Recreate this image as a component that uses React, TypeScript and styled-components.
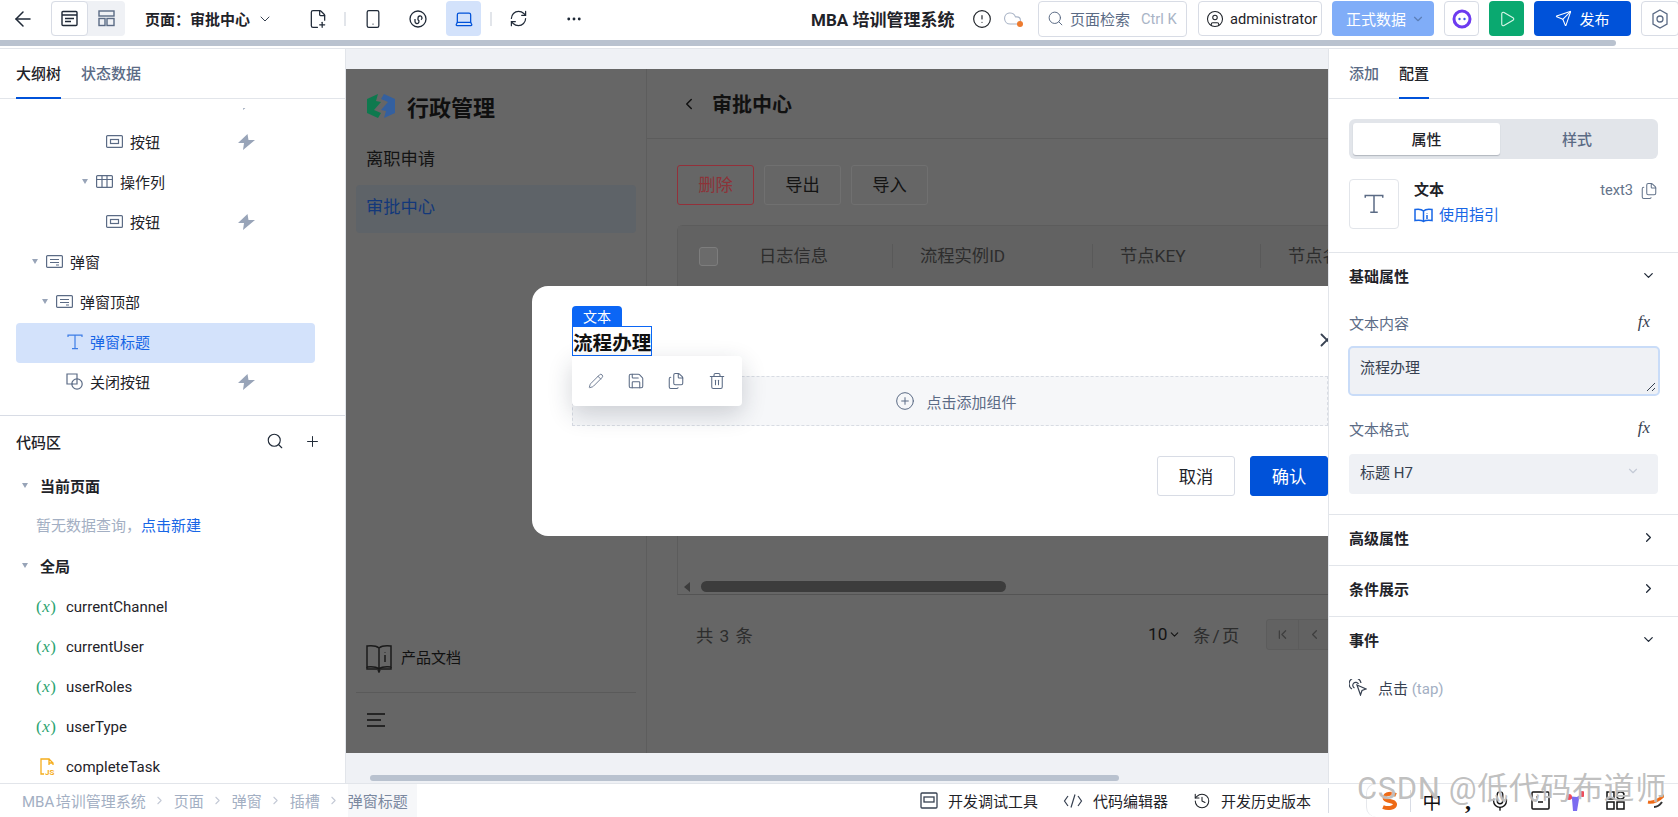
import React from "react";
import styled, { createGlobalStyle } from "styled-components";
import {
  ArrowLeft, ChevronDown, ChevronRight, ChevronLeft, ChevronFirst, Search, Plus, X, Pencil, Save, Files, Trash2,
  CirclePlus, Laptop, Smartphone, FilePlus2, RefreshCw, Ellipsis, Send, Play, CircleUser, History, CircleAlert,
  Cloud, Mic,
} from "lucide-react";

const Global = createGlobalStyle`
  html, body, #root { margin: 0; padding: 0; height: 100%; }
  body {
    overflow: hidden;
    font-family: Roboto, "Noto Sans CJK SC", sans-serif;
    font-size: 15px;
    color: #1f2329;
    background: #fff;
  }
`;

const Page = styled.div`
  position: relative; width: 1678px; height: 817px; display: flex; flex-direction: column; overflow: hidden;
`;

/* ---------- top bar ---------- */
const TopBar = styled.header`
  height: 40px; flex: none; display: flex; align-items: center; padding-bottom: 3px; box-sizing: border-box; overflow: hidden;
`;
const BackBtn = styled.span`
  display: flex; margin-left: 11px; color: #1f2937;
`;
const ViewToggle = styled.div`
  margin-left: 16px; width: 74px; height: 35px; display: grid; grid-template-columns: 37px 37px; background: #eff1f5; border-radius: 4px;
`;
const ViewOption = styled.span<{ $on?: boolean }>`
  display: flex; align-items: center; justify-content: center; border-radius: 4px; box-sizing: border-box;
  background: ${(p) => (p.$on ? "#fff" : "transparent")};
  border: ${(p) => (p.$on ? "1px solid #d8dce5" : "none")};
`;
const PageTitle = styled.strong`
  margin-left: 20px; font-weight: 700; white-space: nowrap; width: 105px; display: block;
`;
const TitleCaret = styled.span`
  display: flex; margin-left: 7px; margin-right: 27px; color: #374151;
`;
const IconBtn = styled.span<{ $on?: boolean; $ml?: number }>`
  width: 35px; height: 35px; display: flex; align-items: center; justify-content: center; border-radius: 4px; flex: none;
  margin-left: ${(p) => p.$ml ?? 0}px;
  color: ${(p) => (p.$on ? "#0052d9" : "#1f2937")};
  background: ${(p) => (p.$on ? "#d3e2fb" : "transparent")};
`;
const BarSep = styled.i`
  width: 2px; height: 14px; background: #e2e5ea; margin: 0 9px; flex: none;
`;
const AppName = styled.strong`
  margin-left: 220px; font-size: 17px; font-weight: 700; width: 160px; white-space: nowrap; flex: none;
`;
const Alert = styled.span`
  display: flex; margin-left: 1px; color: #1f2329;
`;
const CloudWrap = styled.span`
  position: relative; display: flex; margin-left: 11px; margin-right: 16px; color: #a9b4c6;
`;
const CloudDot = styled.i`
  position: absolute; right: -1px; bottom: 1px; width: 6px; height: 6px; border-radius: 50%; background: #ed7b2f;
`;
const SearchBox = styled.div`
  width: 149px; height: 36px; box-sizing: border-box; border: 1px solid #d8dce5; border-radius: 4px; display: flex; align-items: center; padding-left: 8px; flex: none; color: #5b6b85;
`;
const SearchText = styled.span`
  margin-left: 6px; width: 71px; white-space: nowrap;
`;
const Kbd = styled.span`
  color: #a9b4c6; white-space: nowrap; font-size: 14.67px;
`;
const UserBox = styled.div`
  margin-left: 11px; width: 124px; height: 35px; box-sizing: border-box; border: 1px solid #d8dce5; border-radius: 4px; display: flex; align-items: center; gap: 6px; padding-left: 7px; flex: none; white-space: nowrap; font-size: 14.67px;
`;
const DataBtn = styled.div`
  margin-left: 10px; width: 102px; height: 35px; background: #80adf8; color: #fff; border-radius: 4px; display: flex; align-items: center; padding-left: 14px; box-sizing: border-box; gap: 5px; flex: none; white-space: nowrap;
`;
const SquareBtn = styled.div<{ $bg?: string; $w?: number }>`
  margin-left: 10px; width: ${(p) => p.$w ?? 35}px; height: 35px; box-sizing: border-box; border-radius: 4px; flex: none;
  display: flex; align-items: center; justify-content: center;
  background: ${(p) => p.$bg ?? "#fff"};
  border: ${(p) => (p.$bg ? "none" : "1px solid #d8dce5")};
`;
const PublishBtn = styled.div`
  margin-left: 10px; width: 97px; height: 35px; background: #0052d9; color: #fff; border-radius: 4px; display: flex; align-items: center; justify-content: center; gap: 7px; flex: none;
`;
const TopScroll = styled.div`
  height: 9px; flex: none; border-bottom: 1px solid #e2e5ea; box-sizing: border-box;
`;
const TopThumb = styled.div`
  width: 1616px; height: 6px; background: #b9c2cf; border-radius: 0 3px 3px 0;
`;

/* ---------- shell ---------- */
const Main = styled.main`
  flex: 1; min-height: 0; display: flex;
`;
const Left = styled.aside`
  width: 346px; flex: none; box-sizing: border-box; border-right: 1px solid #e2e5ea; display: flex; flex-direction: column;
`;
const Tabs = styled.div<{ $pl: number }>`
  height: 50px; flex: none; box-sizing: border-box; border-bottom: 1px solid #e2e5ea; display: flex; gap: 20px; padding-left: ${(p) => p.$pl}px;
`;
const Tab = styled.span<{ $on?: boolean }>`
  height: 50px; box-sizing: border-box; display: flex; align-items: center; font-weight: 500; white-space: nowrap; padding-bottom: 2px;
  color: ${(p) => (p.$on ? "#1f2329" : "#5b6b85")};
  border-bottom: 2px solid ${(p) => (p.$on ? "#0052d9" : "transparent")};
`;

/* tree */
const Tree = styled.div`
  height: 317px; flex: none; box-sizing: border-box; padding-top: 9px; border-bottom: 1px solid #d8dce5;
`;
const TreeViewport = styled.div`
  height: 100%; overflow: hidden;
`;
const TreeList = styled.div`
  margin-top: -25px;
`;
const TreeRow = styled.div<{ $depth: number; $on?: boolean }>`
  height: 40px; width: 299px; margin-left: 16px; box-sizing: border-box; display: flex; align-items: center; border-radius: 4px;
  padding: 0 60px 3px ${(p) => 16 + p.$depth * 10}px;
  background: ${(p) => (p.$on ? "#d3e2fb" : "transparent")};
  color: ${(p) => (p.$on ? "#1766e6" : "#1f2329")};
`;
const Caret = styled.i<{ $show?: boolean }>`
  width: 0; height: 0; flex: none; margin-right: 8px;
  border-left: 3.5px solid transparent; border-right: 3.5px solid transparent;
  border-top: 5px solid ${(p) => (p.$show ? "#98a4b8" : "transparent")};
`;
const TreeIcon = styled.span`
  display: flex; width: 17px; justify-content: center; margin-right: 7px; flex: none;
`;
const Bolt = styled.span`
  display: flex; margin-left: auto;
`;
const CodeArea = styled.div`
  flex: 1; min-height: 0; overflow: hidden;
`;
const CodeHead = styled.div`
  height: 50px; display: flex; align-items: center; padding: 0 24px 0 16px; font-weight: 500;
`;
const CodeTitle = styled.span`
  flex: 1;
`;
const CodeTools = styled.span`
  display: flex; gap: 20px; color: #1f2937; align-items: center;
`;
const GroupRow = styled.div`
  height: 40px; display: flex; align-items: center; padding: 0 0 2px 22px; box-sizing: border-box; font-weight: 700;
`;
const GroupCaret = styled(Caret)`
  margin-right: 12px;
`;
const EmptyRow = styled.div`
  height: 40px; display: flex; align-items: center; padding: 0 0 3px 36px; box-sizing: border-box; color: #a3afc3;
`;
const NewLink = styled.span`
  color: #1766e6;
`;
const VarRow = styled.div`
  height: 40px; display: flex; align-items: center; padding: 2px 0 0 36px; box-sizing: border-box;
`;
const VarMark = styled.span`
  width: 30px; flex: none; color: #2ba471; font-family: "Liberation Serif", serif; font-size: 17px; white-space: nowrap; letter-spacing: 0.5px;
  & > em { font-style: italic; }
`;
const JsMark = styled.span`
  width: 30px; flex: none; display: flex; padding-left: 4px; box-sizing: border-box;
`;

/* canvas */
const Canvas = styled.section`
  flex: 1; min-width: 0; background: #eff1f5; padding-top: 20px; box-sizing: border-box;
`;
const Stage = styled.div`
  position: relative; height: 684px; background: #666; overflow: hidden; display: flex;
`;
const CanvasThumb = styled.div`
  margin: 22px 0 0 24px; width: 749px; height: 6px; background: #b9c2cf; border-radius: 3px;
`;
const Nav = styled.nav`
  width: 301px; flex: none; box-sizing: border-box; border-right: 1px solid #5d5d5d; display: flex; flex-direction: column;
`;
const Brand = styled.div`
  height: 64px; flex: none; display: flex; align-items: center; padding: 10px 0 0 21px; box-sizing: border-box; gap: 12px; font-size: 22px; font-weight: 700; color: #0f0f0f;
`;
const NavItem = styled.div<{ $on?: boolean }>`
  width: 280px; height: 48px; margin: 0 0 4px 10px; padding: 0 0 ${(p) => (p.$on ? 8 : 0)}px 10px; box-sizing: border-box; border-radius: 4px; display: flex; align-items: center; font-size: 17.3px;
  color: ${(p) => (p.$on ? "#13387a" : "#141414")};
  background: ${(p) => (p.$on ? "#5e6368" : "transparent")};
`;
const NavFoot = styled.div`
  margin: auto 10px 0;
`;
const DocRow = styled.div`
  height: 61px; display: flex; align-items: center; gap: 9px; padding: 0 0 8px 10px; box-sizing: border-box; border-bottom: 1px solid #5a5a5a; color: #111;
`;
const DocLabel = styled.span`
  margin-bottom: 4px;
`;
const MenuRow = styled.div`
  height: 60px; display: flex; align-items: center; padding: 0 0 6px 11px; box-sizing: border-box; color: #111;
`;
const Content = styled.div`
  flex: none; width: 900px;
`;
const ContentHead = styled.div`
  height: 70px; box-sizing: border-box; border-bottom: 1px solid #5c5c5c; display: flex; align-items: center; padding-left: 33px; gap: 14px; font-size: 20px; font-weight: 700; color: #111;
`;
const ActionRow = styled.div`
  display: flex; gap: 10px; padding: 26px 0 0 30px;
`;
const GhostBtn = styled.div<{ $danger?: boolean }>`
  width: 77px; height: 40px; box-sizing: border-box; border-radius: 3px; display: flex; align-items: center; justify-content: center; font-size: 17.3px; padding-bottom: 3px;
  color: ${(p) => (p.$danger ? "#8c3338" : "#141414")};
  border: 1px solid ${(p) => (p.$danger ? "#93303a" : "#707070")};
`;
const TableBox = styled.div`
  position: relative; margin: 20px 0 0 30px; width: 880px; height: 370px; box-sizing: border-box; border: 1px solid #5c5c5c; border-bottom-color: #545454; border-radius: 6px 0 0 0;
`;
const TableHead = styled.div`
  height: 60px; background: #626262; display: grid; grid-template-columns: 54px 161px 200px 168px 200px; font-size: 17.3px; color: #2d2d2d;
`;
const HeadCell = styled.div`
  position: relative; display: flex; align-items: center; padding: 0 0 4px 27px; white-space: nowrap;
  &::after { content: ""; position: absolute; right: 0; top: 18px; height: 24px; width: 1px; background: #595959; }
`;
const CheckCell = styled.div`
  display: flex; align-items: center; padding-left: 21px;
`;
const CheckBox = styled.i`
  width: 19px; height: 19px; box-sizing: border-box; border: 1px solid #7d7d7d; border-radius: 3px; background: #6b6b6b;
`;
const HScroll = styled.div`
  position: absolute; left: 6px; bottom: 2px; display: flex; align-items: center; gap: 11px;
`;
const HArrow = styled.i`
  width: 0; height: 0; border-top: 5px solid transparent; border-bottom: 5px solid transparent; border-right: 6px solid #3c3c3c;
`;
const HThumb = styled.i`
  width: 305px; height: 11px; border-radius: 6px; background: #3c3c3c;
`;
const Pager = styled.div`
  height: 82px; display: flex; align-items: center; padding: 0 0 4px 49px; box-sizing: border-box; font-size: 17.3px; color: #2d2d2d; white-space: nowrap;
`;
const PagerTotal = styled.span`
  width: 452px; word-spacing: 2px; flex: none;
`;
const PageSize = styled.span`
  display: flex; align-items: center; gap: 1px; color: #141414; width: 45px; flex: none;
`;
const PerPage = styled.span`
  width: 73px; flex: none; word-spacing: -2px;
`;
const PagerBtns = styled.span`
  display: flex; width: 80px; height: 31px; box-sizing: border-box; border: 1px solid #5c5c5c; border-radius: 3px; background: #626262; color: #3f3f3f;
`;
const PagerBtn = styled.span`
  width: 31px; display: flex; align-items: center; justify-content: center; border-right: 1px solid #5c5c5c;
`;

/* modal */
const Modal = styled.div`
  position: absolute; left: 186px; top: 217px; width: 836px; height: 250px; box-sizing: border-box; background: #fff; border-radius: 16px; padding: 20px 40px 0; color: #1f2329;
`;
const CloseX = styled.span`
  position: absolute; right: 30px; top: 43px; display: flex; color: #374151;
`;
const KindTag = styled.div`
  width: 50px; height: 20px; background: #0b66f5; color: #fff; border-radius: 4px 4px 0 0; display: flex; align-items: center; justify-content: center; font-size: 14px;
`;
const Selected = styled.div`
  width: 80px; height: 30px; box-sizing: border-box; border: 1px solid #0b66f5; display: flex; align-items: center; font-size: 19.6px; font-weight: 700; white-space: nowrap; color: #111;
`;
const FloatTools = styled.div`
  position: absolute; left: 40px; top: 70px; z-index: 2; width: 170px; height: 50px; background: #fff; border-radius: 4px; box-shadow: 0 8px 24px rgba(30, 40, 60, 0.2); display: flex; align-items: center; justify-content: space-around; padding: 0 5px; box-sizing: border-box; color: #5b6b85;
`;
const DropZone = styled.div`
  margin-top: 20px; height: 50px; box-sizing: border-box; background: #f6f7f9; border: 1px dashed #d8dce3; display: flex; align-items: center; justify-content: center; gap: 11px; color: #5b6b85; padding: 0 0 0 12px;
`;
const ModalFoot = styled.div`
  margin-top: 30px; display: flex; justify-content: flex-end; gap: 15px;
`;
const ModalBtn = styled.div<{ $primary?: boolean }>`
  width: 78px; height: 40px; box-sizing: border-box; border-radius: 3px; display: flex; align-items: center; justify-content: center; font-size: 17.3px; padding-bottom: 2px;
  color: ${(p) => (p.$primary ? "#fff" : "#1f2329")};
  background: ${(p) => (p.$primary ? "#0052d9" : "#fff")};
  border: 1px solid ${(p) => (p.$primary ? "#0052d9" : "#d8dce5")};
`;

/* right panel */
const Right = styled.aside`
  width: 350px; flex: none; box-sizing: border-box; border-left: 1px solid #e2e5ea; display: flex; flex-direction: column;
`;
const Seg = styled.div`
  flex: none; margin: 20px 20px 0; height: 40px; padding: 4px; box-sizing: border-box; background: #e2e5ea; border-radius: 6px; display: grid; grid-template-columns: 147px 1fr;
`;
const SegItem = styled.span<{ $on?: boolean }>`
  display: flex; align-items: center; justify-content: center; border-radius: 3px; font-weight: 500; padding-bottom: 2px;
  color: ${(p) => (p.$on ? "#1f2329" : "#5b6b85")};
  background: ${(p) => (p.$on ? "#fff" : "transparent")};
  box-shadow: ${(p) => (p.$on ? "0 1px 1px rgba(30,40,60,.25)" : "none")};
`;
const Info = styled.div`
  flex: none; display: flex; gap: 15px; padding: 20px 20px 23px; border-bottom: 1px solid #e2e5ea;
`;
const InfoIcon = styled.div`
  width: 50px; height: 50px; box-sizing: border-box; border: 1px solid #e2e5ea; border-radius: 4px; display: flex; align-items: center; justify-content: center; flex: none;
`;
const InfoBody = styled.div`
  flex: 1; height: 50px; display: flex; flex-direction: column; gap: 4px; padding-top: 1px; box-sizing: border-box; line-height: 21px;
`;
const InfoLine = styled.div`
  display: flex; align-items: center; justify-content: space-between;
`;
const InfoName = styled.strong`
  font-weight: 700;
`;
const InfoId = styled.span`
  display: flex; align-items: center; gap: 7px; color: #64748b; font-size: 14.67px;
`;
const GuideLink = styled.span`
  display: flex; align-items: center; gap: 6px; color: #1766e6;
`;
const Section = styled.div<{ $pb?: number; $end?: boolean }>`
  flex: none; padding: 0 20px ${(p) => p.$pb ?? 0}px;
  border-bottom: ${(p) => (p.$end ? "none" : "1px solid #e2e5ea")};
`;
const SectionHead = styled.div<{ $h?: number }>`
  height: ${(p) => p.$h ?? 48}px; display: flex; align-items: center; justify-content: space-between; font-weight: 700; color: #1f2329; box-sizing: border-box;
  padding-bottom: ${(p) => (p.$h ? 6 : 4)}px;
`;
const HeadCaret = styled.span`
  display: flex; margin-right: 2px; color: #1f2937;
`;
const FieldLabel = styled.div<{ $mt: number; $mb: number }>`
  height: 24px; margin: ${(p) => p.$mt}px 0 ${(p) => p.$mb}px; display: flex; align-items: center; justify-content: space-between; color: #5b6b85; box-sizing: border-box; padding-bottom: 6px;
`;
const Fx = styled.span`
  font-family: "Liberation Serif", serif; font-style: italic; font-size: 17px; color: #374151; margin-right: 8px;
`;
const TextArea = styled.div`
  position: relative; margin: 0 -2px 0 -1px; height: 50px; box-sizing: border-box; background: #eff1f5; border: 2px solid #c9dcf8; border-radius: 5px; padding: 8px 10px; color: #374151;
`;
const Grip = styled.svg`
  position: absolute; right: 2px; bottom: 2px;
`;
const SelectBox = styled.div`
  height: 40px; background: #eff1f5; border-radius: 4px; display: flex; align-items: center; justify-content: space-between; padding: 0 18px 6px 11px; box-sizing: border-box; color: #374151;
`;
const EventRow = styled.div`
  display: flex; align-items: center; gap: 11px; margin-top: 12px; color: #374151;
`;
const Tap = styled.span`
  color: #a3afc3;
`;

/* footer */
const Footer = styled.footer`
  height: 34px; flex: none; box-sizing: border-box; border-top: 1px solid #e2e5ea; display: flex; align-items: stretch;
`;
const Crumbs = styled.div`
  display: flex; align-items: center; gap: 7.5px; padding-left: 22px; color: #a3afc3; white-space: nowrap;
`;
const CrumbLast = styled.span`
  align-self: stretch; display: flex; align-items: center; background: #f6f7f9; color: #7a889f; padding-right: 9px;
`;
const Tools = styled.div`
  margin-left: auto; margin-right: 349px; align-self: center; height: 25px; width: 409px; box-sizing: border-box; display: flex; align-items: center; gap: 25px; border-right: 1px solid #d8dce5; white-space: nowrap;
`;
const Tool = styled.span`
  display: flex; align-items: center; gap: 10px; color: #1f2329;
`;
const Ime = styled.div`
  position: absolute; right: 0; bottom: 0; width: 312px; height: 34px; box-sizing: border-box; background: #fff; border: 1px solid #e6e8ec; border-right: none; border-bottom: none; border-radius: 10px 0 0 10px; display: flex; align-items: center; padding-left: 13px; color: #111;
`;
const ImeSep = styled.i`
  width: 1px; height: 22px; background: #d8dce5; margin: 0 3px 0 12px; flex: none;
`;
const ImeKey = styled.span<{ $w: number }>`
  width: ${(p) => p.$w}px; flex: none; display: flex; justify-content: center; align-items: center; font-size: 19px;
`;
const ImeComma = styled.b`
  font-size: 24px; line-height: 24px; font-family: "Liberation Serif", serif;
`;
const Watermark = styled.div`
  position: absolute; left: 1357px; top: 771px; font-size: 31px; line-height: 36px; white-space: nowrap; color: rgba(150, 150, 150, 0.6); text-shadow: 0 0 1px #fff; pointer-events: none; letter-spacing: 0.6px;
`;

/* ---------- drawings ---------- */
const S = "#5b6b85";
const BtnIcon = () => (
  <svg width="17" height="13" fill="none" stroke={S} strokeWidth="1.2"><rect x=".6" y=".6" width="15.8" height="11.8" rx="1" /><rect x="4.5" y="4.5" width="8" height="4" /></svg>
);
const GridIcon = () => (
  <svg width="17" height="13" fill="none" stroke={S} strokeWidth="1.2"><rect x=".6" y=".6" width="15.8" height="11.8" rx="1" /><path d="M.6 4.5h15.8M6 .6v11.8M11 .6v11.8" /></svg>
);
const DlgIcon = () => (
  <svg width="17" height="13" fill="none" stroke={S} strokeWidth="1.2"><rect x=".6" y=".6" width="15.8" height="11.8" rx="1" /><path d="M4 4.500h9M4 7.500h9M10 10h3" /></svg>
);
const TIcon = ({ c, w = 16 }: { c: string; w?: number }) => (
  <svg width={w} height={w} viewBox="0 0 16 16" fill="none" stroke={c} strokeWidth="1.2"><path d="M1 3V1.200h14V3M8 1.200v13.400M5 14.600h6" /></svg>
);
const ShapeIcon = () => (
  <svg width="18" height="17" fill="none" stroke={S} strokeWidth="1.2"><path d="M7 11H1V1h10v5" /><circle cx="11" cy="11" r="5.200" /><path d="M11 6v5H6" /></svg>
);
const BoltIcon = () => (
  <svg width="17" height="16" viewBox="0 0 17 16" fill="#98a4b8"><path d="M9.500 0 0 9h6l-1 7 12-10h-6.500z" /></svg>
);
const PageIcon = () => (
  <svg width="17" height="17" fill="none" stroke="#1f2937" strokeWidth="1.4"><rect x="1" y="1.500" width="15" height="14" rx="1" /><path d="M1 5h15M4 8.500h9M4 11.500h6" /></svg>
);
const LayoutIcon = () => (
  <svg width="17" height="17" fill="none" stroke="#5b6b85" strokeWidth="1.4"><rect x="1" y="1" width="15" height="5" /><rect x="1" y="8.500" width="6" height="7" /><rect x="9" y="8.500" width="7" height="7" /></svg>
);
const MiniIcon = () => (
  <svg width="18" height="18" fill="none" stroke="#1f2937" strokeWidth="1.3"><circle cx="9" cy="9" r="8" /><path d="M6 9v2.500a2 2 0 1 0 3-1.700V8a2 2 0 1 1 3 1.700" /></svg>
);
const RobotIcon = () => (
  <svg width="20" height="20" viewBox="0 0 20 20"><circle cx="10" cy="10" r="8" fill="none" stroke="#6d3bf0" strokeWidth="3" /><circle cx="7.500" cy="10" r="1.200" fill="#3c5be8" /><circle cx="12.500" cy="10" r="1.200" fill="#3c5be8" /></svg>
);
const HexIcon = () => (
  <svg width="18" height="20" fill="none" stroke="#5b6b85" strokeWidth="1.3"><path d="M9 1l7 4v10l-7 4-7-4V5z" /><circle cx="9" cy="10" r="3" /></svg>
);
const Logo = () => (
  <svg width="28" height="24" viewBox="0 0 28 24">
    <path fill="#0a7a4d" d="M11 0 0 5v14l11 5 3-5-7-3 7-8-5-1z" opacity=".95" />
    <path fill="#34609f" d="M17 24l11-5V5L17 0l-3 5 7 3-7 8 5 1z" />
  </svg>
);
const BookIcon = () => (
  <svg width="26" height="29" fill="none" stroke="#1b1b1b" strokeWidth="1.500"><path d="M13 4C10 1.500 5 1.500 1 2v21c4-.5 9-.5 12 2 3-2.500 8-2.500 12-2V2c-4-.5-9-.5-12 2zM13 4v21M19 8v.5M19 11v7" /><path d="M1 23v2h24v-2M12 26l1 2 1-2" /></svg>
);
const MenuIcon = () => (
  <svg width="18" height="14" fill="none" stroke="#111" strokeWidth="1.600"><path d="M0 1h18M0 7h14M0 13h18" /></svg>
);
const GuideIcon = () => (
  <svg width="19" height="16" fill="none" stroke="#1766e6" strokeWidth="1.500"><path d="M9.500 3C7.500 1 4 1 1 1.500v11c3-.5 6.500-.5 8.500 1 2-1.500 5.500-1.500 8.500-1v-11C15 1 11.500 1 9.500 3zM9.500 3v10.500M13 5v.5M13 7v4" /></svg>
);
const TapIcon = () => (
  <svg width="18" height="17" fill="none" stroke="#374151" strokeWidth="1.200"><path d="M3 10a6 6 0 1 1 9-6M5.500 9a3 3 0 1 1 4-4" /><path d="M8 6l9 4-4 1.500L11.500 16z" /></svg>
);
const JsIcon = () => (
  <svg width="16" height="18" fill="none" stroke="#f5ad1c" strokeWidth="1.300">
    <path d="M9 7V1H1v15h3M9 1l4 4v2M9 1v4h4" />
    <text x="5" y="16.500" fontSize="8" fontWeight="700" fill="#f5ad1c" stroke="none" fontFamily="Roboto, sans-serif">JS</text>
  </svg>
);
const DebugIcon = () => (
  <svg width="18" height="17" fill="none" stroke="#374151" strokeWidth="1.300"><rect x="1" y="1" width="16" height="15" rx="1" /><rect x="4" y="5" width="10" height="5" /></svg>
);
const CodeIcon = () => (
  <svg width="20" height="16" fill="none" stroke="#374151" strokeWidth="1.200"><path d="M5 3 1.500 8 5 13M15 3l3.500 5L15 13M12 1.500 8 14.500" /></svg>
);
const SogouIcon = () => (
  <svg width="18" height="20" fill="none" stroke="#ee6a16" strokeWidth="4"><path d="M16 4C9 1 3 4 5 8c2 3 9 1 10 5 .5 4-7 5-12 3" /></svg>
);
const GridsIcon = () => (
  <svg width="19" height="19" fill="none" stroke="#111" strokeWidth="1.500"><rect x="1" y="1" width="7" height="7" /><rect x="11" y="1" width="7" height="7" rx="3" /><rect x="1" y="11" width="7" height="7" /><rect x="11" y="11" width="7" height="7" /></svg>
);
const FaceIcon = () => (
  <svg width="19" height="19" fill="none" stroke="#111" strokeWidth="1.500"><rect x="1" y="1" width="17" height="17" rx="1" /><path d="M5 6h1M13 6h1M7 11h5" /></svg>
);
const ColorIcon = () => (
  <svg width="20" height="20"><path d="M0 5l6 3 1 12 4 0 2-12 6-8-8 6z" fill="#7b6bf0" /><circle cx="3" cy="6" r="3" fill="#ee4b5a" /><circle cx="16" cy="3" r="3" fill="#ee4b5a" /></svg>
);
const OrangeIcon = () => (
  <svg width="22" height="18" fill="none" strokeWidth="3"><path d="M2 10c5 1 12-2 16-7" stroke="#ee6a16" /><path d="M8 15c3 0 6-2 8-5" stroke="#333" strokeWidth="2" /></svg>
);

const treeRows = [
  { d: 6, icon: <BtnIcon />, t: "按钮", bolt: true },
  { d: 5, caret: true, icon: <GridIcon />, t: "操作列" },
  { d: 6, icon: <BtnIcon />, t: "按钮", bolt: true },
  { d: 0, caret: true, icon: <DlgIcon />, t: "弹窗" },
  { d: 1, caret: true, icon: <DlgIcon />, t: "弹窗顶部" },
  { d: 2, icon: <TIcon c="#3d7de6" />, t: "弹窗标题", on: true },
  { d: 2, icon: <ShapeIcon />, t: "关闭按钮", bolt: true },
];
const vars = ["currentChannel", "currentUser", "userRoles", "userType"];

export default function App() {
  return (
    <Page>
      <Global />
      <TopBar>
        <BackBtn><ArrowLeft size={24} strokeWidth={1.5} /></BackBtn>
        <ViewToggle>
          <ViewOption $on><PageIcon /></ViewOption>
          <ViewOption><LayoutIcon /></ViewOption>
        </ViewToggle>
        <PageTitle>页面：审批中心</PageTitle>
        <TitleCaret><ChevronDown size={16} strokeWidth={1.5} /></TitleCaret>
        <IconBtn><FilePlus2 size={20} strokeWidth={1.5} /></IconBtn>
        <BarSep />
        <IconBtn><Smartphone size={20} strokeWidth={1.5} /></IconBtn>
        <IconBtn $ml={10}><MiniIcon /></IconBtn>
        <IconBtn $on $ml={11}><Laptop size={20} strokeWidth={1.5} /></IconBtn>
        <BarSep />
        <IconBtn><RefreshCw size={19} strokeWidth={1.5} /></IconBtn>
        <IconBtn $ml={20}><Ellipsis size={18} strokeWidth={1.8} /></IconBtn>
        <AppName>MBA 培训管理系统</AppName>
        <Alert><CircleAlert size={20} strokeWidth={1.4} /></Alert>
        <CloudWrap><Cloud size={19} strokeWidth={1.4} /><CloudDot /></CloudWrap>
        <SearchBox>
          <Search size={17} strokeWidth={1.4} />
          <SearchText>页面检索</SearchText>
          <Kbd>Ctrl K</Kbd>
        </SearchBox>
        <UserBox><CircleUser size={18} strokeWidth={1.4} />administrator</UserBox>
        <DataBtn>正式数据<ChevronDown size={14} color="#5b7fb8" /></DataBtn>
        <SquareBtn><RobotIcon /></SquareBtn>
        <SquareBtn $bg="#0aa970"><Play size={18} color="#d8f5e8" strokeWidth={1.5} /></SquareBtn>
        <PublishBtn><Send size={17} strokeWidth={1.5} />发布</PublishBtn>
        <SquareBtn $w={38}><HexIcon /></SquareBtn>
      </TopBar>
      <TopScroll><TopThumb /></TopScroll>

      <Main>
        <Left>
          <Tabs $pl={16}>
            <Tab $on>大纲树</Tab>
            <Tab>状态数据</Tab>
          </Tabs>
          <Tree>
            <TreeViewport>
              <TreeList>
                <TreeRow $depth={6}><Caret /><TreeIcon><BtnIcon /></TreeIcon><Bolt><BoltIcon /></Bolt></TreeRow>
                {treeRows.map((r, i) => (
                  <TreeRow key={i} $depth={r.d} $on={r.on}>
                    <Caret $show={r.caret} />
                    <TreeIcon>{r.icon}</TreeIcon>
                    {r.t}
                    {r.bolt && <Bolt><BoltIcon /></Bolt>}
                  </TreeRow>
                ))}
              </TreeList>
            </TreeViewport>
          </Tree>
          <CodeArea>
            <CodeHead>
              <CodeTitle>代码区</CodeTitle>
              <CodeTools><Search size={18} strokeWidth={1.5} /><Plus size={17} strokeWidth={1.4} /></CodeTools>
            </CodeHead>
            <GroupRow><GroupCaret $show />当前页面</GroupRow>
            <EmptyRow>暂无数据查询，<NewLink>点击新建</NewLink></EmptyRow>
            <GroupRow><GroupCaret $show />全局</GroupRow>
            {vars.map((v) => (
              <VarRow key={v}><VarMark>(<em>x</em>)</VarMark>{v}</VarRow>
            ))}
            <VarRow><JsMark><JsIcon /></JsMark>completeTask</VarRow>
          </CodeArea>
        </Left>

        <Canvas>
          <Stage>
            <Nav>
              <Brand><Logo />行政管理</Brand>
              <NavItem>离职申请</NavItem>
              <NavItem $on>审批中心</NavItem>
              <NavFoot>
                <DocRow><BookIcon /><DocLabel>产品文档</DocLabel></DocRow>
                <MenuRow><MenuIcon /></MenuRow>
              </NavFoot>
            </Nav>
            <Content>
              <ContentHead><ChevronLeft size={18} strokeWidth={2} />审批中心</ContentHead>
              <ActionRow>
                <GhostBtn $danger>删除</GhostBtn>
                <GhostBtn>导出</GhostBtn>
                <GhostBtn>导入</GhostBtn>
              </ActionRow>
              <TableBox>
                <TableHead>
                  <CheckCell><CheckBox /></CheckCell>
                  <HeadCell>日志信息</HeadCell>
                  <HeadCell>流程实例ID</HeadCell>
                  <HeadCell>节点KEY</HeadCell>
                  <HeadCell>节点名称</HeadCell>
                </TableHead>
                <HScroll><HArrow /><HThumb /></HScroll>
              </TableBox>
              <Pager>
                <PagerTotal>共 3 条</PagerTotal>
                <PageSize>10<ChevronDown size={13} strokeWidth={2} /></PageSize>
                <PerPage>条 / 页</PerPage>
                <PagerBtns>
                  <PagerBtn><ChevronFirst size={15} /></PagerBtn>
                  <PagerBtn><ChevronLeft size={15} /></PagerBtn>
                </PagerBtns>
              </Pager>
            </Content>
            <Modal>
              <CloseX><X size={22} strokeWidth={2} /></CloseX>
              <KindTag>文本</KindTag>
              <Selected>流程办理</Selected>
              <FloatTools>
                <Pencil size={16} strokeWidth={1.3} />
                <Save size={18} strokeWidth={1.4} />
                <Files size={18} strokeWidth={1.4} />
                <Trash2 size={18} strokeWidth={1.4} />
              </FloatTools>
              <DropZone><CirclePlus size={20} strokeWidth={1.2} />点击添加组件</DropZone>
              <ModalFoot>
                <ModalBtn>取消</ModalBtn>
                <ModalBtn $primary>确认</ModalBtn>
              </ModalFoot>
            </Modal>
          </Stage>
          <CanvasThumb />
        </Canvas>

        <Right>
          <Tabs $pl={20}>
            <Tab>添加</Tab>
            <Tab $on>配置</Tab>
          </Tabs>
          <Seg>
            <SegItem $on>属性</SegItem>
            <SegItem>样式</SegItem>
          </Seg>
          <Info>
            <InfoIcon><TIcon c="#5b6b85" w={20} /></InfoIcon>
            <InfoBody>
              <InfoLine>
                <InfoName>文本</InfoName>
                <InfoId>text3<Files size={18} strokeWidth={1.4} /></InfoId>
              </InfoLine>
              <GuideLink><GuideIcon />使用指引</GuideLink>
            </InfoBody>
          </Info>
          <Section $pb={20}>
            <SectionHead>基础属性<HeadCaret><ChevronDown size={15} /></HeadCaret></SectionHead>
            <FieldLabel $mt={12} $mb={9}>文本内容<Fx>fx</Fx></FieldLabel>
            <TextArea>
              流程办理
              <Grip width="10" height="10" fill="none" stroke="#374151"><path d="M1 9l8-8M6 9l3-3" /></Grip>
            </TextArea>
            <FieldLabel $mt={23} $mb={11}>文本格式<Fx>fx</Fx></FieldLabel>
            <SelectBox>标题 H7<ChevronDown size={14} color="#c4cad6" /></SelectBox>
          </Section>
          <Section><SectionHead $h={50}>高级属性<HeadCaret><ChevronRight size={15} /></HeadCaret></SectionHead></Section>
          <Section><SectionHead $h={50}>条件展示<HeadCaret><ChevronRight size={15} /></HeadCaret></SectionHead></Section>
          <Section $end>
            <SectionHead>事件<HeadCaret><ChevronDown size={15} /></HeadCaret></SectionHead>
            <EventRow><TapIcon /><span>点击 <Tap>(tap)</Tap></span></EventRow>
          </Section>
        </Right>
      </Main>

      <Footer>
        <Crumbs>
          MBA{"\u200A"}培训管理系统<ChevronRight size={13} color="#c4cad6" />
          页面<ChevronRight size={13} color="#c4cad6" />
          弹窗<ChevronRight size={13} color="#c4cad6" />
          插槽<ChevronRight size={13} color="#c4cad6" />
          <CrumbLast>弹窗标题</CrumbLast>
        </Crumbs>
        <Tools>
          <Tool><DebugIcon />开发调试工具</Tool>
          <Tool><CodeIcon />代码编辑器</Tool>
          <Tool><History size={18} strokeWidth={1.4} />开发历史版本</Tool>
        </Tools>
      </Footer>
      <Ime>
        <SogouIcon />
        <ImeSep />
        <ImeKey $w={36}>中</ImeKey>
        <ImeKey $w={36}><ImeComma>,</ImeComma></ImeKey>
        <ImeKey $w={28}><Mic size={22} strokeWidth={1.5} /></ImeKey>
        <ImeKey $w={52}><FaceIcon /></ImeKey>
        <ImeKey $w={18}><ColorIcon /></ImeKey>
        <ImeKey $w={62}><GridsIcon /></ImeKey>
        <ImeKey $w={18}><OrangeIcon /></ImeKey>
      </Ime>
      <Watermark>CSDN @低代码布道师</Watermark>
    </Page>
  );
}
